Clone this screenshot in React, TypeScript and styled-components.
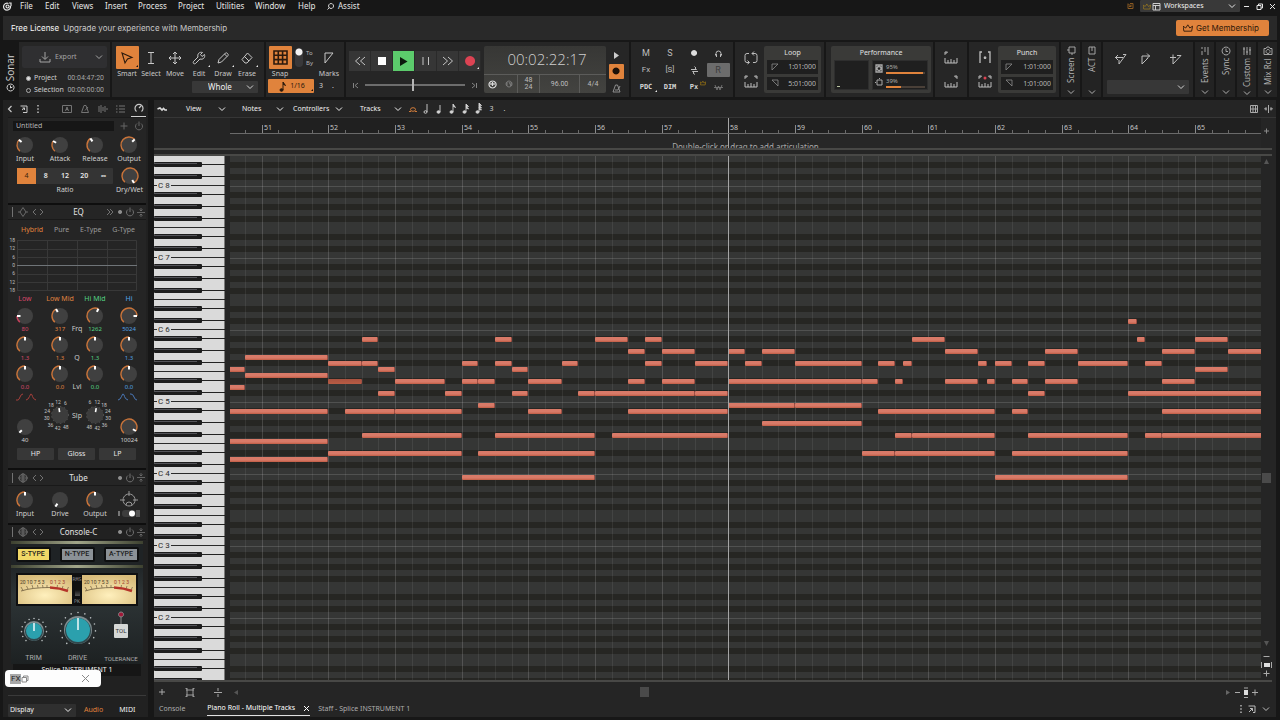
import React from "react";
import styled, { createGlobalStyle, css } from "styled-components";

const ORANGE = "#e0833c";

const Global = createGlobalStyle`
  * { box-sizing: border-box; }
  html, body { margin: 0; background: #171717; }
  body { font: 7px/10px "Noto Sans", sans-serif; color: #d4d4d4; overflow: hidden; }
  button, input, select { font: inherit; color: inherit; background: none; border: 0; padding: 0; margin: 0; border-radius: 0; }
  svg { display: block; flex: none; }
  a { color: inherit; text-decoration: none; }
`;

/* ---------- shared pieces ---------- */

type IconProps = { d: string; w?: number; h?: number; s?: number; fill?: string; color?: string; vb?: string };
const Icon = ({ d, w = 12, h, s = 1, fill = "none", color = "currentColor", vb }: IconProps) => (
  <svg width={w} height={h ?? w} viewBox={vb ?? `0 0 ${w} ${h ?? w}`} fill={fill} stroke={color} strokeWidth={s} aria-hidden="true">
    <path d={d} />
  </svg>
);
const Chevron = ({ w = 8 }: { w?: number }) => <Icon d="M1 2.500 4 5.500 7 2.500" w={w} vb="0 0 8 8" />;

const Shell = styled.div`
  display: flex;
  flex-direction: column;
  height: 100vh;
  padding: 0 3px 3px;
`;
const Spacer = styled.div<{ $h?: number; $w?: number }>`
  flex: none;
  height: ${(p) => p.$h ?? 0}px;
  width: ${(p) => p.$w ?? 0}px;
`;

/* ---------- menu + banner ---------- */

const MenuBar = styled.nav`
  display: flex;
  align-items: center;
  height: 12px;
  margin-bottom: 4px;
  color: #e6e6e6;
`;
const MenuItem = styled.button<{ $w: number }>`
  width: ${(p) => p.$w}px;
  font-size: 8px;
  text-align: left;
  white-space: nowrap;
  display: flex;
  align-items: center;
  gap: 4px;
`;
const Grow = styled.div<{ $f?: number }>`flex: ${(p) => p.$f ?? 1};`;
const SelectWrap = styled.label<{ $w?: number; $h: number; $bg: string; $big?: boolean }>`
  position: relative;
  display: flex;
  align-items: center;
  width: ${(p) => (p.$w ? `${p.$w}px` : "100%")};
  height: ${(p) => p.$h}px;
  background: ${(p) => p.$bg};
  border-radius: 1px;
  font-size: ${(p) => (p.$big ? 8 : 7)}px;
  > svg:last-child { position: absolute; right: 4px; pointer-events: none; }
`;
const Select = styled.select<{ $pad: number }>`
  appearance: none;
  width: 100%;
  height: 100%;
  padding-left: ${(p) => p.$pad}px;
  color: #f0f0f0;
  outline: none;
`;
const WorkIcons = styled.span`
  position: absolute;
  left: 3px;
  display: flex;
  gap: 1px;
`;
const WinButtons = styled.div`
  display: flex;
  align-items: center;
  gap: 4px;
  padding-left: 2px;
  button { width: 9px; height: 9px; display: grid; place-items: center; }
`;
const Banner = styled.div`
  display: flex;
  align-items: center;
  justify-content: space-between;
  height: 24px;
  padding: 0 8px;
  background: #292929;
  font: 8px/12px Inter, sans-serif;
  color: #c8c8c8;
  strong { font-weight: 400; color: #f8f8f8; margin-right: 4px; }
`;
const Membership = styled.button`
  display: flex;
  align-items: center;
  justify-content: center;
  gap: 3px;
  width: 93px;
  height: 16px;
  padding-right: 3px;
  border-radius: 2px;
  background: ${ORANGE};
  color: #2e190b;
`;

/* ---------- control bar ---------- */

const ControlBar = styled.div`
  display: flex;
  gap: 2px;
  height: 55px;
  margin: 2px 0 3px;
`;
const Brand = styled.div`
  width: 14px;
  display: flex;
  flex-direction: column;
  align-items: center;
  justify-content: flex-end;
  gap: 2px;
  padding: 0 0 5px 0;
  span { writing-mode: vertical-rl; transform: rotate(180deg); font: 10px/13px "Open Sans", sans-serif; color: #cfcfcf; }
`;
const Module = styled.section<{ $w: number; $pad?: string; $row?: boolean }>`
  width: ${(p) => p.$w}px;
  flex: none;
  background: #262626;
  padding: ${(p) => p.$pad ?? "4px 3px"};
  display: flex;
  flex-direction: ${(p) => (p.$row ? "row" : "column")};
`;
const ExportBtn = styled.button`
  display: flex;
  align-items: center;
  gap: 4px;
  height: 22px;
  margin: 2px 0 4px;
  padding: 0 4px 0 17px;
  background: #2f2f31;
  color: #a5a5a5;
  border-radius: 2px;
  svg:last-child { margin-left: auto; }
`;
const TimeRow = styled.label`
  display: flex;
  align-items: center;
  gap: 3px;
  height: 12px;
  padding: 0 3px 0 4px;
  color: #d0d0d0;
  input { appearance: none; width: 5px; height: 5px; border-radius: 50%; border: 1px solid #aaa; }
  input:checked { background: #ddd; }
  time { margin-left: auto; font: 7px/10px Roboto, sans-serif; color: #a5a5a5; }
`;
const ToolRow = styled.div`display: flex;`;
const Tool = styled.button<{ $on?: boolean }>`
  width: 24px;
  flex: none;
  display: flex;
  flex-direction: column;
  align-items: center;
  color: #c8c8c8;
  span:first-child {
    position: relative;
    width: 23px;
    height: 23px;
    display: grid;
    place-items: center;
    border-radius: 1px;
    ${(p) => p.$on && css`background: ${ORANGE}; color: #2b1a0d;`}
  }
`;
const WholeRow = styled.div`
  align-self: flex-end;
  margin: 2px 3px 0 0;
`;
const Corner = styled.i<{ $dark?: boolean }>`
  position: absolute;
  right: 1px;
  bottom: 2px;
  border: 1px solid transparent;
  border-right-color: ${(p) => (p.$dark ? "#111" : "#e8e8e8")};
  border-bottom-color: ${(p) => (p.$dark ? "#111" : "#e8e8e8")};
`;
const SwitchV = styled.label`
  display: flex;
  align-items: center;
  gap: 3px;
  margin: 0 4px 0 3px;
  height: 23px;
  font-size: 6px;
  color: #b5b5b5;
  span { display: flex; flex-direction: column; }
  input { appearance: none; width: 8px; height: 19px; border-radius: 4px; background: radial-gradient(circle at 4px 4px, #f2f2f2 3px, #38383a 4px); }
`;
const SnapVal = styled.button`
  position: relative;
  width: 46px;
  height: 14px;
  background: ${ORANGE};
  color: #2b1a0d;
  display: flex;
  align-items: center;
  justify-content: center;
  gap: 4px;
  border-radius: 1px;
`;
const SnapLine = styled.div`
  display: flex;
  align-items: center;
  gap: 5px;
  span { width: 8px; }
`;
const TransportKeys = styled.div`
  display: flex;
  margin: 5px 0 8px;
`;
const TKey = styled.button<{ $play?: boolean }>`
  position: relative;
  width: 22px;
  height: 20px;
  display: grid;
  place-items: center;
  background: ${(p) => (p.$play ? "#5ccb6c" : "#363636")};
  color: ${(p) => (p.$play ? "#10240f" : "#c4c4c4")};
  border-right: 1px solid #2a2a2a;
`;
const Scrub = styled.div`
  display: flex;
  align-items: center;
  justify-content: space-between;
  height: 12px;
  padding: 0 3px;
  color: #848484;
  input {
    appearance: none; width: 100px; height: 2px; background: #6d6d6d; outline: none;
  }
  input::-webkit-slider-thumb { appearance: none; width: 2px; height: 12px; background: #b5b5b5; }
`;
const Lcd = styled.div`
  width: 122px;
  flex: none;
  margin-left: 3px;
  background: linear-gradient(#373735, #434340);
  border-radius: 2px;
  display: flex;
  flex-direction: column;
`;
const LcdTime = styled.output`
  height: 28px;
  padding-left: 4px;
  text-align: center;
  font: 300 15px/26px "Open Sans", sans-serif;
  color: #cfcfcf;
`;
const LcdRow = styled.div`
  display: grid;
  grid-template-columns: 34px 22px 40px 1fr;
  flex: 1;
  border-top: 1px solid #5c5c5a;
  font: 7px/7px Roboto, sans-serif;
  color: #bdbdbd;
  > * { display: flex; align-items: center; justify-content: center; gap: 8px; text-align: center; border-right: 1px solid #5c5c5a; }
  > *:last-child { border: 0; }
`;
const SideKeys = styled.div`
  display: flex;
  flex-direction: column;
  align-items: center;
  justify-content: space-around;
  flex: 1;
  padding-top: 3px;
  height: 50px;
`;
const RecKey = styled.button`
  width: 15px;
  height: 15px;
  background: ${ORANGE};
  border-radius: 1px;
  display: grid;
  place-items: center;
`;
const MixGrid = styled.div`
  display: grid;
  grid-template-columns: repeat(4, 24px);
  grid-auto-rows: 17px;
  color: #bdbdbd;
`;
const MixBtn = styled.button<{ $on?: boolean; $mono?: boolean; $small?: boolean }>`
  position: relative;
  display: grid;
  place-items: center;
  width: 23px;
  height: 14px;
  margin: 1px auto;
  border-radius: 1px;
  font-family: Roboto, sans-serif;
  font-size: ${(p) => (p.$small ? 8 : 9)}px;
  ${(p) => p.$on && css`background: #6c6c6c; color: #3c3c3c;`}
  ${(p) => p.$mono && css`font: 700 7px/8px "DejaVu Sans Mono", monospace; color: #d4d4d4;`}
`;
const Crown = styled.span`
  position: absolute;
  right: 0;
  top: 0;
  color: #8f6d14;
`;
const IconCol = styled.div`
  width: 26px;
  display: flex;
  flex-direction: column;
  align-items: center;
  justify-content: space-around;
  color: #bdbdbd;
`;
const Box = styled.div`
  flex: 1;
  height: 47px;
  background: #3a3a38;
  border-radius: 2px;
  padding: 0 3px 3px;
  display: flex;
  flex-direction: column;
  gap: 3px;
  h3 { margin: 0; height: 11px; font: inherit; line-height: 14px; text-align: center; color: #e0e0e0; }
`;
const PosField = styled.label`
  display: flex;
  align-items: center;
  flex: 1;
  background: #1f1f1f;
  padding: 0 2px 0 4px;
  color: #8c8c8c;
  input { width: 100%; min-width: 0; text-align: right; color: #b5b5b5; height: 12px; }
`;
const PerfBody = styled.div`
  display: grid;
  grid-template-columns: 35px 1fr;
  gap: 3px;
  flex: 1;
`;
const PerfCell = styled.div`
  background: #1f1f1f;
  border: 1px solid #2e2e2e;
  display: flex;
  flex-direction: column;
  justify-content: space-around;
  color: #aaa;
`;
const Meter = styled.div`
  display: flex;
  align-items: center;
  gap: 3px;
  padding: 0 2px;
  div { flex: 1; font-size: 6px; line-height: 9px; }
`;
const Bar = styled.span`
  display: block;
  height: 2px;
  background: #4a4038;
  i { display: block; height: 2px; background: ${ORANGE}; }
`;
const VTab = styled.button`
  width: 19px;
  flex: none;
  background: #232323;
  display: flex;
  flex-direction: column;
  align-items: center;
  padding: 4px 0 1px;
  gap: 2px;
  color: #b0b0b0;
  span { flex: 1; writing-mode: vertical-rl; transform: rotate(180deg); text-align: right; font: 8px/10px "Noto Sans", sans-serif; white-space: nowrap; }
`;
const MarkerIcons = styled.div`
  display: flex;
  height: 32px;
  padding: 4px 7px 0 8px;
  gap: 13px;
  color: #bdbdbd;
  svg:last-child { margin-left: auto; }
`;

/* ---------- side strip ---------- */

const Body = styled.main`
  display: flex;
  flex: 1;
  min-height: 0;
  gap: 6px;
`;
const Side = styled.aside`
  width: 145px;
  flex: none;
  background: #212121;
  padding: 0 2px 0 5px;
  display: flex;
  flex-direction: column;
`;
const SideTabs = styled.div`
  display: flex;
  align-items: center;
  height: 18px;
  border-bottom: 1px solid #1a1a1a;
  color: #747474;
  button { width: 18px; height: 16px; display: grid; place-items: center; }
  button:nth-child(-n+3) { color: #c8c8c8; width: 14px; }
  button:nth-child(1) { margin-left: -5px; }
  button:nth-child(4) { margin-left: auto; }
  button:last-child { color: #c8c8c8; border-bottom: 1px solid #d0d0d0; width: 15px; margin-left: 1px; }
`;
const Panel = styled.section<{ $h: number }>`
  height: ${(p) => p.$h}px;
  flex: none;
  background: #252525;
  border-bottom: 2px solid #0e0e0e;
`;
const PresetRow = styled.div`
  display: flex;
  align-items: center;
  height: 15px;
  padding: 0 4px 0 5px;
  gap: 6px;
  color: #666;
  input { width: 101px; height: 10px; background: #161616; padding-left: 3px; color: #b5b5b5; line-height: 10px; }
  > svg:first-of-type { margin-left: auto; }
`;
const Four = styled.div<{ $top?: number }>`
  position: relative;
  display: grid;
  grid-template-columns: 34px 36px 34px 34px;
  margin-top: ${(p) => p.$top ?? 0}px;
`;
const KnobCell = styled.div<{ $c?: string; $small?: boolean }>`
  display: flex;
  flex-direction: column;
  align-items: center;
  width: 34px;
  justify-self: center;
  color: ${(p) => p.$c ?? "#d0d0d0"};
  font-size: ${(p) => (p.$small ? 6 : 7)}px;
  line-height: ${(p) => (p.$small ? 8 : 9)}px;
  white-space: nowrap;
`;
const MidLabel = styled.span<{ $b?: number }>`
  position: absolute;
  left: 0;
  right: 0;
  bottom: ${(p) => p.$b ?? 0}px;
  text-align: center;
  line-height: 9px;
  color: #cacaca;
`;
const RatioArea = styled.div`
  display: flex;
  padding: 4px 0 0 9px;
  justify-content: space-between;
  text-align: center;
`;
const RatioBtns = styled.div`
  display: flex;
  width: 96px;
  height: 16px;
  margin: 1px 0;
  background: #343434;
  border-radius: 1px;
  button { flex: 1; color: #e4e4e4; font-weight: 600; }
  button:first-child { background: ${ORANGE}; color: #3a1f0c; font-weight: 400; }
`;
const Head = styled.header<{ $h: number }>`
  display: flex;
  align-items: center;
  height: ${(p) => p.$h}px;
  padding: 0 1px 0 4px;
  gap: 3px;
  color: #727272;
  border-bottom: 1px solid #191919;
  h2 { flex: 1; margin: 0; font: 8px/12px "Noto Sans", sans-serif; color: #e2e2e2; text-align: center; }
`;
const HeadSide = styled.div<{ $right?: boolean }>`
  width: 38px;
  display: flex;
  align-items: center;
  gap: 2px;
  justify-content: ${(p) => (p.$right ? "flex-end" : "flex-start")};
  svg:nth-child(2) { margin: 0 1px 0 2px; }
`;
const Tabs4 = styled.div`
  display: flex;
  justify-content: space-between;
  align-items: center;
  height: 20px;
  padding: 0 11px 0 13px;
  color: #9a9a9a;
  button:first-child { color: ${ORANGE}; }
`;
const Graph = styled.div`
  display: flex;
  height: 51px;
  padding-right: 9px;
  gap: 2px;
`;
const Scale = styled.div`
  width: 8px;
  display: flex;
  flex-direction: column;
  justify-content: space-between;
  text-align: right;
  font: 5px/6px Roboto, sans-serif;
  color: #c0c0c0;
  margin: -3px 0 -2px;
`;
const BandNames = styled(Four)`
  height: 16px;
  text-align: center;
  line-height: 16px;
  white-space: nowrap;
`;
const BandName = styled.span<{ $c: string }>`color: ${(p) => p.$c};`;
const Buttons3 = styled.div`
  display: grid;
  grid-template-columns: repeat(3, 1fr);
  gap: 4px;
  margin-top: 4px;
  padding: 0 10px 0 9px;
  button { height: 12px; background: #373737; color: #e6e6e6; border-radius: 1px; }
`;
const Face = styled.div`
  flex: none;
  height: 123px;
  margin: 1px 3px 0;
  background: linear-gradient(#171a1c, #2d3436 45%, #1d2122);
  display: flex;
  flex-direction: column;
`;
const Chrome = styled.div`
  height: 3px;
  background: linear-gradient(90deg, #3d4130, #a2a68a 50%, #3d4130);
`;
const Types = styled.div`
  display: flex;
  justify-content: space-around;
  align-items: center;
  height: 21px;
  background: #1f2325;
`;
const TypeBtn = styled.button<{ $on?: boolean }>`
  width: 35px;
  height: 15px;
  border: 2px solid #0e0f10;
  border-radius: 2px;
  background: ${(p) => (p.$on ? "#f0d867" : "#8b9197")};
  color: #1b1b1b;
  font: 500 7px/9px Roboto, sans-serif;
`;
const VuRow = styled.div`
  display: flex;
  justify-content: space-between;
  align-items: center;
  height: 33px;
  margin: 5px 5px 0;
  padding: 2px;
  background: #0f1011;
  color: #8b8b8b;
  font: 5px/6px "DejaVu Sans Mono", monospace;
  text-align: center;
`;
const VuSwitch = styled.div`
  width: 9px;
  i { display: block; width: 5px; height: 12px; margin: 2px auto; background: linear-gradient(#111 50%, #555); }
`;
const DriveRow = styled.div`
  display: grid;
  grid-template-columns: 45px 43px 1fr;
  flex: 1;
  text-align: center;
  font: 7px/9px Roboto, sans-serif;
  color: #adadad;
`;
const DriveCell = styled.div<{ $top: number; $s?: boolean }>`
  display: flex;
  flex-direction: column;
  align-items: center;
  padding-top: ${(p) => p.$top}px;
  height: 57px;
  font-size: ${(p) => (p.$s ? 6 : 7)}px;
  span { margin-top: auto; }
`;
const Tol = styled.button`
  width: 14px;
  height: 14px;
  background: #d5d8d6;
  color: #333;
  font: 6px/8px Roboto, sans-serif;
  border-radius: 1px;
`;
const StripName = styled.div`
  height: 12px;
  margin: 0 5px;
  background: #161616;
  color: #f0f0f0;
  text-align: center;
  line-height: 12px;
`;
const SideFoot = styled.div`
  display: flex;
  align-items: center;
  height: 14px;
  gap: 8px;
  margin-top: 7px;
  color: #f0f0f0;
  button:first-of-type { color: ${ORANGE}; }
  button:last-of-type { margin-left: 8px; }
`;
const Rule = styled.hr`
  border: 0;
  height: 1px;
  margin: auto 0 0;
  background: #3a3a3a;
  width: 100%;
`;
const FloatWin = styled.div`
  position: absolute;
  left: 5px;
  bottom: 33px;
  width: 96px;
  height: 17px;
  border-radius: 4px;
  background: #fdfdfd;
  display: flex;
  align-items: center;
  padding: 0 11px 0 5px;
  color: #888;
  b { background: #a8a8a8; color: #222; font: 8px/10px Roboto, sans-serif; padding: 0 1px; }
  button { margin-left: auto; }
`;

/* ---------- piano roll ---------- */

const Editor = styled.section`
  flex: 1;
  min-width: 0;
  background: #252525;
  display: flex;
  flex-direction: column;
  margin-right: 1px;
`;
const EdBar = styled.div`
  display: flex;
  align-items: center;
  height: 18px;
  padding: 0 3px;
  border-bottom: 1px solid #363636;
  color: #dcdcdc;
`;
const EdMenu = styled.button<{ $w: number; $l: number }>`
  width: ${(p) => p.$w}px;
  margin-left: ${(p) => p.$l}px;
  display: flex;
  align-items: center;
  justify-content: space-between;
  color: #f0f0f0;
`;
const NoteVals = styled.div`
  display: flex;
  margin-left: 5px;
  button { width: 13px; height: 14px; display: grid; place-items: center; color: #d4d4d4; }
  button:first-child { color: ${ORANGE}; }
`;
const EdTools = styled.div`
  display: flex;
  gap: 6px;
  color: #aaa;
`;
const RollRow = styled.div<{ $h?: number }>`
  display: flex;
  ${(p) => (p.$h ? css`height: ${p.$h}px;` : css`flex: 1; min-height: 0;`)}
`;
const KeyCol = styled.div`
  position: relative;
  width: 71px;
  margin-right: 5px;
  flex: none;
  overflow: hidden;
`;
const Canvas = styled.div<{ $bg?: string; $line?: boolean }>`
  position: relative;
  flex: 1;
  overflow: hidden;
  background: ${(p) => p.$bg ?? "transparent"};
  ${(p) => p.$line && css`border-bottom: 1px solid #6a6a6a;`}
`;
const Gutter = styled.div`
  width: 11px;
  margin-right: 4px;
  flex: none;
  display: flex;
  flex-direction: column;
  align-items: center;
  color: #8a8a8a;
`;
const BarNo = styled.span`
  position: absolute;
  bottom: 0;
  height: 8px;
  padding-left: 1px;
  border-left: 1px solid #8a8a8a;
  font-size: 7px;
  line-height: 6px;
  color: #c4c4c4;
`;
const Tick = styled.i`
  position: absolute;
  bottom: 0;
  width: 1px;
  height: 3px;
  background: #6b6b6b;
`;
const Double = styled.div<{ $single?: boolean }>`
  height: ${(p) => (p.$single ? 3 : 8)}px;
  margin-right: 4px;
  border: solid #484846;
  border-width: ${(p) => (p.$single ? "2px 0 0" : "2px 0")};
`;
const ArtHint = styled.span`
  position: absolute;
  left: 0;
  right: 0;
  top: 8px;
  text-align: center;
  color: #aaa;
  font: 8px/10px "Noto Sans", sans-serif;
`;
const Note = styled.i<{ $dark?: boolean }>`
  position: absolute;
  height: 5px;
  border-radius: 1px;
  border-right: 1px solid #a04f44;
  background: ${(p) => (p.$dark ? "linear-gradient(#a85240, #b85c44)" : "linear-gradient(#d97a68, #d87a68 60%, #c05c44)")};
`;
const Playhead = styled.i`
  position: absolute;
  top: 0;
  bottom: 0;
  width: 1px;
  background: #a5a5a5;
`;
const CLabel = styled.span`
  position: absolute;
  left: 3px;
  font: 8px/10px Roboto, sans-serif;
  color: #2b2b2b;
  padding: 0 1px;
  background: #dadada;
`;
const Thumb = styled.i<{ $mt?: number }>`
  width: 9px;
  height: 10px;
  margin-top: ${(p) => p.$mt ?? 0}px;
  background: #4a4a4a;
`;
const ToolFoot = styled.div`
  display: flex;
  align-items: center;
  height: 18px;
  padding: 0 17px 0 4px;
  color: #a8a8a8;
  gap: 19px;
  > svg:nth-child(4) { margin-left: -7px; }
`;
const TabFoot = styled.div`
  display: flex;
  align-items: stretch;
  height: 16px;
  padding-left: 5px;
  color: #adadad;
  a { display: flex; align-items: center; gap: 8px; height: 15px; }
`;
const ActiveTab = styled.a`
  margin: 0 8px 0 22px;
  color: #fff;
  border-bottom: 1px solid #e0e0e0;
`;
const FootIcons = styled.div`
  margin-left: auto;
  display: flex;
  align-items: center;
  gap: 6px;
  padding-right: 6px;
  color: #bdbdbd;
`;

/* ---------- data ---------- */

const QUARTER = 16.67;
const FIRST = 31.6;
const xq = (q: number) => Math.round(FIRST + q * QUARTER);
const GRID_TOP = 156;

/* key: lane centre; values: start/end in quarters after bar 51 */
const NOTES: [number, [number, number][]][] = [
  [321, [[52, 52.5]]],
  [339, [[6, 7], [14, 15], [20, 22], [23, 24], [39, 41], [52.5, 53], [56, 58]]],
  [351, [[22, 23], [24, 26], [28, 29], [30, 32], [41, 43], [47, 49], [54, 56], [58, 62]]],
  [357, [[-1, 4]]],
  [363, [[4, 6], [6, 7], [12, 13], [14, 15], [18, 19], [23, 24], [26, 28], [29, 30], [32, 36], [37, 38], [38.5, 39], [43, 43.5], [44, 45], [46, 47], [49, 52], [53, 54]]],
  [369, [[-3, -1], [7, 8], [15, 16], [56, 58]]],
  [375, [[-1, 4]]],
  [381, [[4, 6], [8, 11], [12, 13], [13, 14], [16, 18], [22, 23], [24, 26], [28, 36], [36, 37], [38, 38.5], [41, 43], [43.5, 44], [45, 46], [47, 49], [54, 56]]],
  [387, [[-3, -1]]],
  [393, [[7, 8], [11, 12], [15, 16], [19, 20], [20, 26], [26, 28], [46, 47], [52, 62]]],
  [405, [[13, 14], [28, 32], [32, 36]]],
  [411, [[-3, 4], [5, 8], [8, 12], [16, 18], [22, 28], [37, 44], [45, 46], [54, 62]]],
  [423, [[30, 36]]],
  [435, [[6, 12], [14, 20], [21, 28], [38, 39], [39, 44], [46, 52], [53, 54], [54, 62]]],
  [441, [[-3, 4]]],
  [453, [[4, 12], [13, 20], [36, 38], [38, 44], [45, 52]]],
  [459, [[-3, 4]]],
  [477, [[12, 20], [44, 52]]],
];
const OCTAVES = [0, 1, 2, 3, 4, 5, 6, 7, 8].map((i) => ({ y: 114 + 72 * i - GRID_TOP, n: 9 - i }));
const SHARPS = [9, 21, 33, 51, 63];
const QUARTERS = Array.from({ length: 61 }, (_, i) => i - 1);

/* ---------- drawings ---------- */

const polar = (cx: number, cy: number, r: number, a: number) => {
  const t = ((a - 90) * Math.PI) / 180;
  return [cx + r * Math.cos(t), cy + r * Math.sin(t)];
};
const arc = (cx: number, cy: number, r: number, a: number, b: number) => {
  const [x1, y1] = polar(cx, cy, r, a);
  const [x2, y2] = polar(cx, cy, r, b);
  return `M${x1} ${y1}A${r} ${r} 0 ${b - a > 180 ? 1 : 0} 1 ${x2} ${y2}`;
};
const Knob = ({ a, c = "#c9743a" }: { a: number; c?: string }) => {
  const [x1, y1] = polar(9, 9, 4.5, a);
  const [x2, y2] = polar(9, 9, 8, a);
  return (
    <svg width="18" height="18" viewBox="0 0 18 18" fill="none" aria-hidden="true">
      <circle cx="9" cy="9" r="8" fill="#404040" />
      {a > -134 && <path d={arc(9, 9, 8, -140, a)} stroke={c} strokeWidth="1.4" />}
      <path d={`M${x1} ${y1}L${x2} ${y2}`} stroke="#fff" strokeWidth="2" />
    </svg>
  );
};
const Slope = ({ a, nums }: { a: number; nums: [string, number][] }) => {
  const [x, y] = polar(19, 19, 7, a);
  const [x0, y0] = polar(19, 19, 3, a);
  return (
    <svg width="38" height="38" viewBox="0 0 38 38" aria-hidden="true">
      <circle cx="19" cy="19" r="8.5" fill="#3c3c3c" stroke="#5c5c5c" strokeWidth="1" strokeDasharray="1 3" />
      <path d={`M${x0} ${y0}L${x} ${y}`} stroke="#fff" strokeWidth="1.6" />
      {nums.map(([t, d]) => {
        const [tx, ty] = polar(19, 19, 13.5, d);
        return <text key={t} x={tx} y={ty + 2} fontSize="5" fontFamily="Roboto" fill="#c4c4c4" textAnchor="middle">{t}</text>;
      })}
    </svg>
  );
};
const BigKnob = ({ size, r }: { size: number; r: number }) => {
  const c = size / 2;
  return (
    <svg width={size} height={size} viewBox={`0 0 ${size} ${size}`} aria-hidden="true">
      {[-140, -116, -93, -70, -46, -23, 0, 23, 46, 70, 93, 116, 140].map((a) => {
        const [x, y] = polar(c, c, c - 1.5, a);
        return <circle key={a} cx={x} cy={y} r="0.8" fill="#b9bfc0" />;
      })}
      <circle cx={c} cy={c} r={r + 2} fill="#7e8b8e" />
      <circle cx={c} cy={c + 1} r={r + 1} fill="#30484d" />
      <circle cx={c} cy={c} r={r} fill="#2ba0ad" />
      <path d={`M${c} ${c - r}V${c}`} stroke="#fff" strokeWidth="1.4" />
    </svg>
  );
};
const Vu = ({ id }: { id: string }) => (
  <svg width="54" height="29" viewBox="0 0 54 29" aria-hidden="true">
    <defs>
      <radialGradient id={id} cx="0.5" cy="0.7" r="0.7">
        <stop offset="0" stopColor="#fff0bd" />
        <stop offset="1" stopColor="#d9bd7c" />
      </radialGradient>
    </defs>
    <rect width="54" height="29" fill={`url(#${id})`} />
    <path d="M3 16Q14 12.500 32 12.500" fill="none" stroke="#5a4a30" strokeWidth="0.700" />
    <path d="M5 15.500L3 12M10 14L8.500 11M15 13.200L14 10M20 12.700L19.500 10M25 12.500L24.500 10M29 12.500V10M39 13L39.500 10M44 14L45 11M49 15L50.500 12" stroke="#5a4a30" strokeWidth="0.600" />
    <path d="M32 12.500Q42 13 50 16" fill="none" stroke="#b5342a" strokeWidth="2.600" />
    <text x="2" y="9" fontSize="5" fontFamily="Roboto" fill="#4b3d28">20 10 7 5 3</text>
    <text x="32" y="9" fontSize="5" fontFamily="Roboto" fill="#a03a2c">0 1 2 3</text>
  </svg>
);
const Piano = () => (
  <svg width="71" height="100%" aria-hidden="true">
    <rect width="71" height="100%" fill="#dadada" />
    {OCTAVES.map(({ y }) => (
      <g key={y}>
        <path d={`M0 ${y - 0.5}H71M0 ${y - 30.5}H71`} stroke="#2a2a2a" />
        {SHARPS.map((s) => (
          <g key={s}>
            <path d={`M46 ${y + s - 0.5}H71`} stroke="#222" />
            <rect x="0" y={y + s - 3} width="48" height="5" rx="1" fill="#1d1d1d" />
            <rect x="0" y={y + s - 2} width="43" height="1" fill="#55555a" />
          </g>
        ))}
      </g>
    ))}
    <rect x="70" width="2" height="100%" fill="#1a1a1a" opacity="0.5" />
  </svg>
);
const GridLines = () => (
  <svg width="100%" height="100%" aria-hidden="true" shapeRendering="crispEdges">
    <rect width="100%" height="100%" fill="#353635" />
    {OCTAVES.map(({ y }) => (
      <g key={y}>
        {SHARPS.map((s) => <rect key={s} y={y + s - 3} width="100%" height="6" fill="#262623" />)}
        <rect y={y} width="100%" height="1" fill="#505150" />
      </g>
    ))}
    {Array.from({ length: 120 }, (_, i) => i - 1).map((q) => (
      <rect key={q} x={xq(q)} width="1" height="100%" fill="#fff" opacity={q % 4 === 0 ? 0.15 : 0.07} />
    ))}
  </svg>
);

const P = {
  power: "M3 2.500A3.500 3.500 0 1 0 7 2.500M5 0.500V5",
  rulerL: "M1 7V12H13V7M4 12V9M7 12V8M10 12V9",
  crown: "M1 9H9.500L10.500 3.500 7.500 5.500 5.300 2 3 5.500 0 3.500Z",
};
const HEAD = "M3 9a1.500 1.300 0 1 0 3 0a1.500 1.300 0 1 0 -3 0";
const NOTE_SHAPES = [
  "M2.500 6.500a2.500 1.800 0 1 0 5 0a2.500 1.800 0 1 0 -5 0M1 8.500H3M7 8.500H9",
  `${HEAD}M6 9V1`,
  `${HEAD}ZM6 9V2`,
  `${HEAD}ZM6 9V1L8.500 4.500L6 3`,
  `${HEAD}ZM6 9V1L8.500 3.500L6 3L8.500 6L6 5`,
  `${HEAD}ZM6 9V0L8.500 2.500L6 2L8.500 5L6 4.500L8.500 7L6 6.500`,
];
const MENUS: [string, number][] = [["File", 25], ["Edit", 27], ["Views", 33], ["Insert", 33], ["Process", 40], ["Project", 38], ["Utilities", 39], ["Window", 43], ["Help", 29]];
const BANDS: { color: string; name: string; v: string[]; a: number[] }[] = [
  { name: "Low", color: "#d8486a", v: ["80", "1.3", "0.0"], a: [-90, 0, 0] },
  { name: "Low Mid", color: "#e08440", v: ["317", "1.3", "0.0"], a: [-30, 0, 0] },
  { name: "Hi Mid", color: "#54d084", v: ["1262", "1.3", "0.0"], a: [25, 0, 0] },
  { name: "Hi", color: "#52a2e4", v: ["5024", "1.3", "0.0"], a: [90, 0, 0] },
];

const ModHead = ({ name, h, dbl, eq }: { name: string; h: number; dbl?: boolean; eq?: boolean }) => (
  <Head $h={h}>
    <HeadSide>
      <Icon w={2} h={10} d="M0.500 0V10" />
      <Icon w={10} s={0.9} d={eq ? "M0 5H2L5 0.500 8 5H10M2 5L5 9.500 8 5" : "M5 1a4 4 0 1 0 0.100 0M0 5H10M5 0V10M2.500 3H7.500M2.500 7H7.500"} />
      <Icon w={6} h={8} d="M5 1L2 4L5 7" />
      <Icon w={6} h={8} d="M1 1L4 4L1 7" />
    </HeadSide>
    <h2>{name}</h2>
    <HeadSide $right>
      {dbl ? <Icon w={8} h={8} d="M1 1L4 4L1 7M4 1L7 4L4 7" /> : <Spacer $w={8} />}
      <Icon w={4} d="M2 0a2 2 0 1 0 .1 0" fill="#8f8f8f" s={0} />
      <Icon w={10} d={P.power} />
      <Icon w={8} h={9} s={0.8} d="M0 4.500H8M4 0V3M4 9V6M2.500 1.500L4 3L5.500 1.500M2.500 7.500L4 6L5.500 7.500" />
    </HeadSide>
  </Head>
);

const VTabs = ({ items }: { items: [string, string][] }) => (
  <>
    {items.map(([t, d]) => (
      <VTab key={t}>
        <Icon w={10} s={0.9} d={d} />
        <span>{t}</span>
        <Chevron />
      </VTab>
    ))}
  </>
);

const Positions = ({ title, a, b }: { title: string; a: string; b: string }) => (
  <Box>
    <h3>{title}</h3>
    <PosField><Icon w={8} s={0.8} d="M1 1H7L1 7Z" /><input aria-label={`${title} start`} defaultValue={a} /></PosField>
    <PosField><Icon w={8} s={0.8} d="M1 1H7V7Z" /><input aria-label={`${title} end`} defaultValue={b} /></PosField>
  </Box>
);

export default function App() {
  return (
    <Shell>
      <Global />
      <MenuBar>
        <MenuItem $w={17} aria-label="Sonar menu"><Icon w={9} s={1.2} d="M7.500 4a3.500 3.500 0 1 1 -2 -2.500M4.500 3a1.500 1.500 0 1 0 .1 0M6 1H8V4" /></MenuItem>
        {MENUS.map(([t, w]) => <MenuItem key={t} $w={w}>{t}</MenuItem>)}
        <MenuItem $w={50}><Icon w={7} s={0.9} d="M4 0.500a2.500 2.500 0 1 0 .1 0M2.500 4.500L0.500 6.500" />Assist</MenuItem>
        <Grow />
        <Icon w={13} h={8} color="#8a5a22" d="M1 1.500V6.500H6V1.500H3M1.500 2L4 4.500M4 2.500V4.500H2" />
        <SelectWrap $w={100} $h={12} $bg="#393939">
          <WorkIcons>
            <Icon w={8} h={9} vb="0 0 11 11" color="#9c7a1e" d={P.crown} />
            <Icon w={9} color="#ccc" d="M1 1.500H8V8H1ZM1 3.500H8M3.500 3.500V8" />
          </WorkIcons>
          <Select $pad={24} aria-label="Workspaces"><option>Workspaces</option></Select>
          <Chevron />
        </SelectWrap>
        <WinButtons>
          <button aria-label="Minimize"><Icon w={7} d="M1 3.500H6" /></button>
          <button aria-label="Restore"><Icon w={7} d="M1 2.500H5V6.500H1ZM2.500 2.500V1H6.500V5H5" /></button>
          <button aria-label="Close"><Icon w={7} d="M1 1L6 6M6 1L1 6" /></button>
        </WinButtons>
      </MenuBar>
      <Banner>
        <span><strong>Free License</strong>Upgrade your experience with Membership</span>
        <Membership><Icon w={10} h={10} vb="0 0 11 11" d={P.crown} />Get Membership</Membership>
      </Banner>

      <ControlBar>
        <Brand><span>Sonar</span><Icon w={9} s={1} d="M4.500 1a3.500 3.500 0 1 0 .1 0M4.500 2.500V5L6.500 4" /></Brand>
        <Module $w={91} $pad="2px 3px 0">
          <ExportBtn><Icon w={12} d="M6 1V8M3 5.500L6 8.500L9 5.500M1 8V11H11V8" />Export<Chevron /></ExportBtn>
          <TimeRow><input type="radio" name="range" defaultChecked />Project<time>00:04:47:20</time></TimeRow>
          <TimeRow><input type="radio" name="range" />Selection<time>00:00:00:00</time></TimeRow>
        </Module>
        <Module $w={152}>
          <ToolRow>
            <Tool $on><span><Icon w={14} s={1.1} d="M2 2L12 6.500L7.500 8L5 12Z" /><Corner $dark /></span><span>Smart</span></Tool>
            <Tool><span><Icon w={14} d="M4 1.500H10M4 12.500H10M7 1.500V12.500" /></span><span>Select</span></Tool>
            <Tool><span><Icon w={14} d="M7 1V13M1 7H13M5 3L7 1L9 3M5 11L7 13L9 11M3 5L1 7L3 9M11 5L13 7L11 9" /></span><span>Move</span></Tool>
            <Tool><span><Icon w={14} d="M1.500 10.500L6 6C5 3 7.500 0.500 10.500 1.500L8.500 3.500L10 5.500L12.500 3.500C13.500 6.500 11 9 8 8L3.500 12.500C2 13.500 0.500 12 1.500 10.500Z" /><Corner /></span><span>Edit</span></Tool>
            <Tool><span><Icon w={14} d="M2 12L3 8.500L9.500 2C10.500 1 13 3.500 12 4.500L5.500 11ZM8.500 3L11 5.500" /><Corner /></span><span>Draw</span></Tool>
            <Tool><span><Icon w={14} d="M7.500 2L12 6.500L7 12H5L2 8.500ZM4.500 5.500L9 10" /><Corner /></span><span>Erase</span></Tool>
          </ToolRow>
          <WholeRow>
            <SelectWrap $w={66} $h={12} $bg="#383838" $big>
              <Select $pad={16} aria-label="Draw duration"><option>Whole</option></Select>
              <Chevron />
            </SelectWrap>
          </WholeRow>
        </Module>
        <Module $w={78} $pad="4px 2px">
          <ToolRow>
            <Tool $on><span><Icon w={15} s={1.6} d="M1 1H14V14H1ZM1 5.300H14M1 9.600H14M5.300 1V14M9.600 1V14" /></span><span>Snap</span></Tool>
            <SwitchV><input type="checkbox" aria-label="Snap by" /><span><span>To</span><span>By</span></span></SwitchV>
            <Tool><span><Icon w={12} d="M2 1H10L2 11Z" /></span><span>Marks</span></Tool>
          </ToolRow>
          <SnapLine><SnapVal><Icon w={9} h={11} fill="currentColor" d={NOTE_SHAPES[3]} />1/16<Corner $dark /></SnapVal><span>3</span><span>.</span></SnapLine>
        </Module>
        <Module $w={283} $row>
          <div>
            <TransportKeys>
              <TKey aria-label="Rewind"><Icon w={12} d="M6 2L1.500 6L6 10M11 2L6.500 6L11 10" /></TKey>
              <TKey aria-label="Stop"><Icon w={8} s={0} fill="#fff" d="M0 0H8V8H0Z" /></TKey>
              <TKey $play aria-label="Play"><Icon w={9} s={0} fill="#0c1a0c" d="M1 0L8.500 4.500L1 9Z" /></TKey>
              <TKey aria-label="Pause"><Icon w={8} d="M1 0V8M6.500 0V8" /></TKey>
              <TKey aria-label="Fast forward"><Icon w={12} d="M1 2L5.500 6L1 10M6 2L10.500 6L6 10" /></TKey>
              <TKey aria-label="Record"><Icon w={10} s={0} fill="#dc4353" d="M5 0a5 5 0 1 0 .1 0" /><Corner /></TKey>
            </TransportKeys>
            <Scrub><Icon w={7} d="M1.500 1V6M6 1L3 3.500L6 6" /><input type="range" aria-label="Position" defaultValue={48} /><Icon w={7} d="M5.500 1V6M1 1L4 3.500L1 6" /></Scrub>
          </div>
          <Lcd>
            <LcdTime>00:02:22:17</LcdTime>
            <LcdRow>
              <span><Icon w={9} s={1.2} color="#ddd" d="M4.500 1a3.500 3.500 0 1 0 .1 0M4.500 2V6M3 3V5M6 3V5" /><Icon w={8} s={0.8} color="#888" d="M4 1a3 3 0 1 0 .1 0M2 2V6M4 2L6 6V2" /></span>
              <span>48<br />24</span><span>96.00</span><span>4/4</span>
            </LcdRow>
          </Lcd>
          <SideKeys>
            <Icon w={7} s={0} fill="#ccc" d="M1 0L6 3.500L1 7Z" />
            <RecKey aria-label="Arm"><Icon w={8} s={0} fill="#1b1008" d="M4 .5a3.500 3.500 0 1 0 .1 0" /></RecKey>
            <Icon w={9} s={0.9} color="#999" d="M1 8L3.500 1H5.500L8 8ZM3 6H6L8 2" />
          </SideKeys>
        </Module>
        <Module $w={102} $pad="3px 2px 0 3px">
          <MixGrid>
            <MixBtn>M</MixBtn><MixBtn>S</MixBtn>
            <MixBtn aria-label="Arm"><Icon w={6} s={0} fill="#ddd" d="M3 0a3 3 0 1 0 .1 0" /></MixBtn>
            <MixBtn aria-label="Listen"><Icon w={9} d="M2 7V4.500a2.500 2.500 0 0 1 5 0V7M1 5.500H2.500V8M8 5.500H6.500V8" /></MixBtn>
            <MixBtn $small>Fx</MixBtn><MixBtn $small>[S]</MixBtn>
            <MixBtn aria-label="Automation"><Icon w={9} d="M1 3.500H6.500L5 2M8 5.500H2.500L4 7M4.500 0.500L6 2M5 8.500L3 7" /></MixBtn>
            <MixBtn $on>R</MixBtn>
            <MixBtn $mono>PDC<Corner /></MixBtn><MixBtn $mono>DIM</MixBtn>
            <MixBtn $mono>Px<Crown><Icon w={6} vb="0 0 11 11" s={1.5} d={P.crown} /></Crown></MixBtn>
            <MixBtn aria-label="Write"><Icon w={9} s={0.9} color="#777" d="M1 2L3 7L4.500 3L6 7L8 2M0 4.500H9" /></MixBtn>
          </MixGrid>
        </Module>
        <Module $w={89} $row>
          <IconCol>
            <Icon w={14} d="M5 2.500H3A2 2 0 0 0 1 4.500V9.500A2 2 0 0 0 3 11.500H5M3.500 9.500L5.500 11.500L3.500 13M9 11.500H11A2 2 0 0 0 13 9.500V4.500A2 2 0 0 0 11 2.500H8M10 .5L8 2.500L10 4.500" />
            <Icon w={14} h={13} d={`${P.rulerL}M1 1H3.500L1 3.500ZM13 1H10.500L13 3.500Z`} />
          </IconCol>
          <Positions title="Loop" a="1:01:000" b="5:01:000" />
        </Module>
        <Module $w={107} $row $pad="4px 2px 4px 5px">
          <Box>
            <h3>Performance</h3>
            <PerfBody>
              <PerfCell><Icon w={8} h={26} color="#b9c3a0" d="M2 24.500H5" /></PerfCell>
              <PerfCell>
                <Meter><Icon w={8} h={9} d="M1 1H7V8H1ZM4 2.500a2 2 0 1 0 .1 0" s={1.3} /><div>95%<Bar><i style={{ width: "95%" }} /></Bar></div></Meter>
                <Meter><Icon w={8} h={9} d="M2 2H7V7H2ZM0 4.500H1M4.500 0V1" /><div>39%<Bar><i style={{ width: "39%" }} /></Bar></div></Meter>
              </PerfCell>
            </PerfBody>
          </Box>
        </Module>
        <Module $w={32} $row>
          <IconCol>
            <Icon w={14} h={13} d={`${P.rulerL}M1 1H3.500L1 3.500Z`} />
            <Icon w={14} h={13} d={`${P.rulerL}M13 1H10.500L13 3.500Z`} />
          </IconCol>
        </Module>
        <Module $w={90} $row>
          <IconCol>
            <Icon w={14} h={13} s={1.3} d="M4 1H2V12M10 1H12V12M7 6a.7 .7 0 1 0 .1 0" />
            <svg width="14" height="13" fill="none" aria-hidden="true">
              <path d={`${P.rulerL}M1 1H3.500L1 3.500ZM13 1H10.500L13 3.500Z`} stroke="currentColor" />
              <circle cx="7" cy="3" r="1.500" fill="#dc4353" />
            </svg>
          </IconCol>
          <Positions title="Punch" a="1:01:000" b="1:01:000" />
        </Module>
        <VTabs items={[["Screen", "M3 1H9V7H3ZM1 4H3M6 7V9"], ["ACT", "M2 1H8V8H2ZM5 1V5"]]} />
        <Module $w={90} $pad="6px 4px 2px">
          <MarkerIcons>
            <Icon w={12} h={14} d="M0 5.500H8M3 3L0.500 5.500L3 8M11 2.500L4 12V8M8 2.500H11" />
            <Icon w={12} h={14} d="M2 12V4H10M7 1.500L9.500 4L7 6.500M2 12L8 6" />
            <Icon w={12} h={14} d="M0 5.500H6M3 2.500V12L11 3.500H7" />
          </MarkerIcons>
          <SelectWrap $h={14} $bg="#373737"><Select $pad={4} aria-label="Marker"><option> </option></Select><Chevron /></SelectWrap>
        </Module>
        <VTabs items={[["Events", "M2 1V3M5 1V6M8 1V9M2 5V9"], ["Sync", "M5 1a4 4 0 1 0 .1 0M5 2.500V5.500H7"], ["Custom", "M2 1V9M5 1V9M8 1V9M1 3H3M4 6H6M7 4H9"], ["Mix Rcl", "M1 2.500H3L4 1H6L7 2.500H9V8.500H1ZM5 3.500a2 2 0 1 0 .1 0"]]} />
      </ControlBar>

      <Body>
        <Side>
          <SideTabs>
            <button aria-label="Back"><Icon w={6} h={8} s={1.2} d="M4.500 1L1.500 4L4.500 7" /></button>
            <button aria-label="Dock"><Icon w={8} d="M0.500 1H7V7.500H3M2 5L4.500 3M2.500 3H4.500V5" /></button>
            <button aria-label="More"><Icon w={2} h={8} s={1.4} d="M1 0V1.400M1 3.300V4.700M1 6.600V8" /></button>
            <button aria-label="Arranger"><Icon w={10} d="M0.500 1.500H9.500V8.500H0.500ZM3.500 7L5 3L6.500 7M4 5.500H6" /></button>
            <button aria-label="Tempo"><Icon w={10} d="M1.500 8.500L4 1.500H6L8.500 8.500ZM5 6.500L8 3" /></button>
            <button aria-label="Wave"><Icon w={10} d="M1 2V8M3 1V9M5 3V7M7 2V8M9 4V6" /></button>
            <button aria-label="List"><Icon w={10} d="M0 2H1.500M3 2H9M0 5H1.500M3 5H9M0 8H1.500M3 8H9" /></button>
            <button aria-label="Channel"><Icon w={10} s={1.2} d="M2.500 8.500A4 4 0 1 1 7.500 8.500M5 5L7 3" /></button>
          </SideTabs>
          <Panel $h={87}>
            <PresetRow><input aria-label="Preset" defaultValue="Untitled" /><Icon w={8} d="M4 0.500V7.500M0.500 4H7.500" /><Icon w={10} d={P.power} /></PresetRow>
            <Four $top={3}>
              <KnobCell><Knob a={-50} />Input</KnobCell>
              <KnobCell><Knob a={-60} />Attack</KnobCell>
              <KnobCell><Knob a={-35} />Release</KnobCell>
              <KnobCell><Knob a={45} />Output</KnobCell>
            </Four>
            <RatioArea>
              <div>
                <RatioBtns><button>4</button><button>8</button><button>12</button><button>20</button><button>∞</button></RatioBtns>
                <span>Ratio</span>
              </div>
              <KnobCell><Knob a={150} />Dry/Wet</KnobCell>
            </RatioArea>
          </Panel>
          <Panel $h={265}>
            <ModHead name="EQ" h={15} dbl eq />
            <Tabs4><button>Hybrid</button><button>Pure</button><button>E-Type</button><button>G-Type</button></Tabs4>
            <Graph>
              <Scale>{["18", "12", "6", "0", "6", "12", "18"].map((t, i) => <span key={i}>{t}</span>)}</Scale>
              <svg width="120" height="51" aria-hidden="true">
                <path d="M0 .5H119.500V50.500H0M0 9.500H119M0 17.500H119M0 34.500H119M0 42.500H119M.5 0V50M30.500 0V50M60.500 0V50M90.500 0V50" fill="none" stroke="#383838" />
                <path d="M0 25.500H120" stroke="#6f7478" />
              </svg>
            </Graph>
            <BandNames>{BANDS.map((b) => <BandName key={b.name} $c={b.color}>{b.name}</BandName>)}</BandNames>
            {["Frq", "Q", "Lvl"].map((l, r) => (
              <Four key={l} $top={r ? 3 : 0}>
                {BANDS.map((b) => <KnobCell key={b.name} $small $c={b.color}><Knob a={b.a[r]} c={r === 0 && b.name === "Low" ? "#c8415c" : undefined} />{b.v[r]}</KnobCell>)}
                <MidLabel>{l}</MidLabel>
              </Four>
            ))}
            <Four $top={1}>
              <KnobCell $small>
                <Icon w={22} h={11} color="#a8403c" d="M2 8H4Q5 8 6 5T9 2M12 8Q14 8 15.500 4.500T17 2Q18 2 18.500 4.500T22 8" />
                <Spacer $h={15} />
                <Knob a={-135} />40
              </KnobCell>
              <KnobCell><Spacer $h={4} /><Slope a={-8} nums={[["6", 24], ["12", -8], ["18", -42], ["24", -72], ["30", -103], ["36", -135], ["42", -170], ["48", 155]]} /></KnobCell>
              <KnobCell><Spacer $h={4} /><Slope a={10} nums={[["6", -22], ["12", 10], ["18", 42], ["24", 72], ["30", 103], ["36", 135], ["42", 170], ["48", -155]]} /></KnobCell>
              <KnobCell $small>
                <Icon w={22} h={11} color="#4a78b8" d="M0 8Q2 8 3.500 4.500T5 2Q6 2 6.500 4.500T10 8M12 2H13Q15 2 16 5T19 8" />
                <Spacer $h={15} />
                <Knob a={120} />10024
              </KnobCell>
              <MidLabel $b={24}>Slp</MidLabel>
            </Four>
            <Buttons3><button>HP</button><button>Gloss</button><button>LP</button></Buttons3>
          </Panel>
          <Panel $h={55}>
            <ModHead name="Tube" h={16} />
            <Four $top={5}>
              <KnobCell><Knob a={0} />Input</KnobCell>
              <KnobCell><Knob a={-145} />Drive</KnobCell>
              <KnobCell><Knob a={0} />Output</KnobCell>
              <KnobCell>
                <Icon w={18} h={18} color="#999" d="M9 3a6 6 0 1 0 .1 0M9 0V5M0 9H5M13 9H18M6 14a3 3 0 0 1 6 0" />
                <svg width="22" height="9" aria-hidden="true">
                  <path d="M0 2H2V7H0Z" fill="#777" />
                  <rect x="4" y="1" width="14" height="7" rx="3" fill="#3c3c3c" />
                  <rect x="18" y="1" width="4" height="7" fill="#555" />
                  <circle cx="14" cy="4.500" r="3" fill="#fff" />
                </svg>
              </KnobCell>
            </Four>
          </Panel>
          <ModHead name="Console-C" h={15} />
          <Face>
            <Chrome />
            <Types><TypeBtn $on>S-TYPE</TypeBtn><TypeBtn>N-TYPE</TypeBtn><TypeBtn>A-TYPE</TypeBtn></Types>
            <Chrome />
            <VuRow><Vu id="vu-left" /><VuSwitch>RMS<i />PK</VuSwitch><Vu id="vu-right" /></VuRow>
            <DriveRow>
              <DriveCell $top={11}><BigKnob size={28} r={8} /><span>TRIM</span></DriveCell>
              <DriveCell $top={5}><BigKnob size={38} r={12} /><span>DRIVE</span></DriveCell>
              <DriveCell $top={5} $s>
                <Icon w={8} h={13} color="#8a8a8a" fill="#a01838" d="M4 1a2.500 2.500 0 1 0 .1 0M4 6V13" />
                <Tol>TOL</Tol><span>TOLERANCE</span>
              </DriveCell>
            </DriveRow>
          </Face>
          <StripName>Splice INSTRUMENT 1</StripName>
          <Rule />
          <SideFoot>
            <SelectWrap $w={68} $h={13} $bg="#2f2f2f"><Select $pad={2} aria-label="Display"><option>Display</option></Select><Chevron /></SelectWrap>
            <button>Audio</button><button>MIDI</button>
          </SideFoot>
        </Side>

        <Editor>
          <EdBar>
            <Icon w={10} h={8} s={1.6} d="M0.500 4L3 3L5 5L6.500 3.500L8 5H10" />
            <EdMenu $w={40} $l={19}>View<Chevron /></EdMenu>
            <EdMenu $w={42} $l={16}>Notes<Chevron /></EdMenu>
            <EdMenu $w={50} $l={9}>Controllers<Chevron /></EdMenu>
            <EdMenu $w={42} $l={17}>Tracks<Chevron /></EdMenu>
            <NoteVals>
              {NOTE_SHAPES.map((d, i) => <button key={i} aria-label={`Note value ${i + 1}`}><Icon w={11} s={0.9} fill={i > 1 ? "currentColor" : "none"} d={d} /></button>)}
              <button>3</button><button>.</button>
            </NoteVals>
            <Grow />
            <EdTools>
              <Icon w={8} d="M0.500 0.500H7.500V7.500H0.500ZM0.500 4H7.500M3 0V8M5.500 0V8" />
              <Icon w={9} h={8} d="M4.500 0V8M3 4H0.500L2 2.500V5.500M6 4H8.500L7 2.500V5.500" />
            </EdTools>
          </EdBar>
          <RollRow $h={16}>
            <KeyCol />
            <Canvas $bg="#202020" $line>
              {QUARTERS.map((q) =>
                q % 4 === 0 && q < 60 ? <BarNo key={q} style={{ left: xq(q) }}>{51 + q / 4}</BarNo> : <Tick key={q} style={{ left: xq(q) }} />
              )}
              <Playhead style={{ left: xq(28) }} />
            </Canvas>
            <Gutter><Icon w={9} h={16} d="M4.500 10.500V15.500M2 13H7" /></Gutter>
          </RollRow>
          <RollRow $h={14}>
            <KeyCol />
            <Canvas $bg="#272727"><ArtHint>Double-click or drag to add articulation</ArtHint><Playhead style={{ left: xq(28) }} /></Canvas>
            <Gutter />
          </RollRow>
          <Double />
          <RollRow>
            <KeyCol>
              <Piano />
              {OCTAVES.filter((o) => o.n > 1 && o.n < 9).map((o) => <CLabel key={o.n} style={{ top: o.y - 5 }}>C {o.n}</CLabel>)}
            </KeyCol>
            <Canvas>
              <GridLines />
              {NOTES.map(([y, list]) =>
                list.map(([a, b]) => (
                  <Note key={`${y}-${a}`} $dark={y === 381 && a === 4} style={{ left: xq(a), width: xq(b) - xq(a), top: y - GRID_TOP - 2 }} />
                ))
              )}
              <Playhead style={{ left: xq(28) }} />
            </Canvas>
            <Gutter>
              <Icon w={7} h={10} s={0} fill="#555" d="M1 8L3.500 3L6 8Z" />
              <Thumb $mt={307} />
              <Grow />
              <Icon w={7} h={8} s={0} fill="#555" d="M1 1L3.500 6L6 1Z" />
              <svg width="11" height="32" aria-hidden="true">
                <path d="M2.500 8.500H8.500M2.500 25.500H8.500M5.500 22.500V28.500M0.500 14V20M10.500 14V20" stroke="#aaa" />
                <rect x="3" y="15" width="6" height="4" fill="#ddd" />
              </svg>
            </Gutter>
          </RollRow>
          <Double $single />
          <ToolFoot>
            <Icon w={8} d="M4 1V7M1 4H7" />
            <Icon w={10} h={9} s={0.9} d="M2 1V8M8 1V8M1 2H9M1 7H9M0.500 0.500H2.500M7.500 0.500H9.500M0.500 8.500H2.500M7.500 8.500H9.500" />
            <Icon w={8} h={9} d="M0 4.500H8M4 0V3M4 9V6" />
            <Icon w={5} s={0} fill="#555" d="M4 0V5L0 2.500Z" />
            <Grow />
            <Thumb />
            <Grow $f={1.48} />
            <svg width="34" height="11" aria-hidden="true">
              <path d="M1 3V8L5 5.500Z" fill="#666" />
              <path d="M10 5.500H15M27 5.500H33M30 2.500V8.500M19 1H23M19 10.500H23" stroke="#aaa" />
              <rect x="19" y="3" width="4" height="5" fill="#ddd" />
            </svg>
          </ToolFoot>
          <TabFoot>
            <a href="#console">Console</a>
            <ActiveTab href="#roll">Piano Roll - Multiple Tracks<Icon w={7} d="M1 1L6 6M6 1L1 6" /></ActiveTab>
            <a href="#staff">Staff - Splice INSTRUMENT 1</a>
            <FootIcons>
              <Icon w={2} h={8} s={1.4} d="M1 0V1.400M1 3.300V4.700M1 6.600V8" />
              <Icon w={8} d="M0.500 1H7V7.500H5M1 7L4.500 3.500M2 3.500H4.500V6" />
              <Chevron />
            </FootIcons>
          </TabFoot>
        </Editor>
      </Body>
      <FloatWin><b>FX</b><Icon w={8} d="M1 2.500H5.500V7H1ZM2.500 2.500V1H7V5.500H5.500" /><button aria-label="Close"><Icon w={9} d="M1 1L8 8M8 1L1 8" /></button></FloatWin>
    </Shell>
  );
}
